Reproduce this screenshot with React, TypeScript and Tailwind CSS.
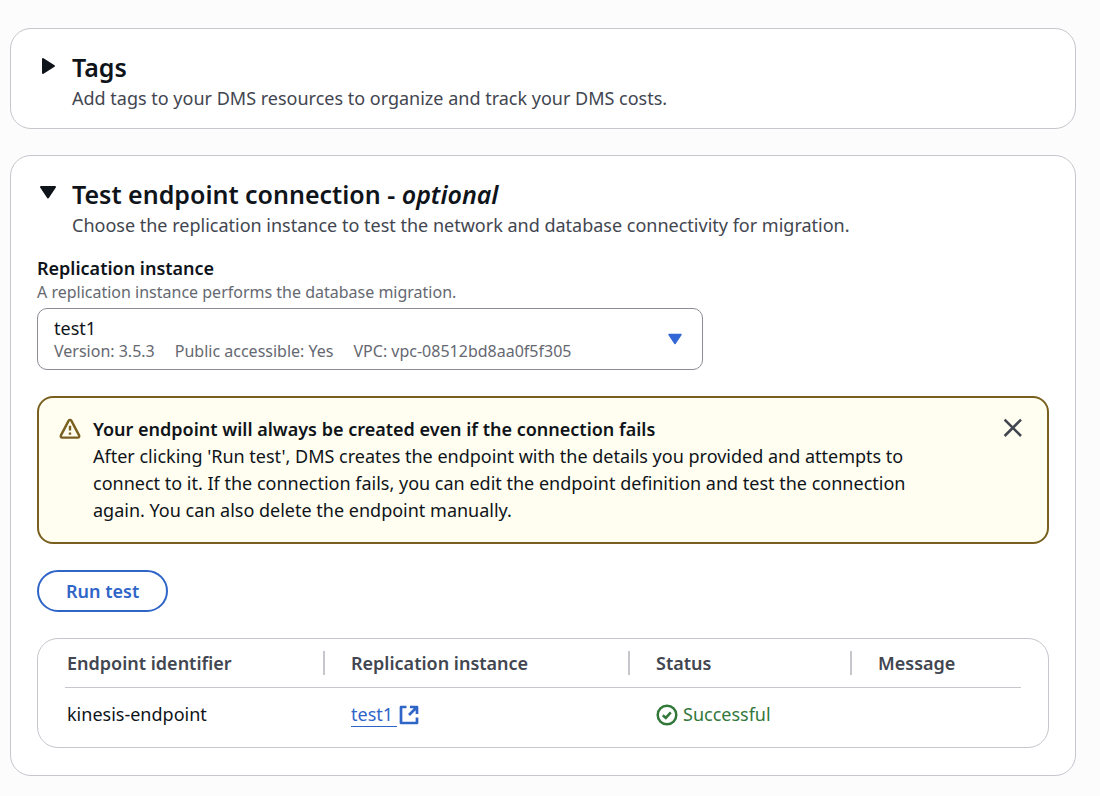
import { useState, type ReactNode } from "react";

function CaretIcon({ open }: { open: boolean }) {
  return (
    <svg width="22" height="22" viewBox="0 0 22 22" fill="currentColor" stroke="currentColor" strokeWidth="2" strokeLinejoin="round" aria-hidden="true">
      {open ? <path d="M4 5h14l-7 10.500z" /> : <path d="M6 4v14l11-7z" />}
    </svg>
  );
}

function WarningIcon() {
  return (
    <svg width="22" height="22" viewBox="0 0 22 22" fill="none" stroke="currentColor" strokeWidth="2.400" strokeLinejoin="round" aria-hidden="true">
      <path d="M9.700 2.600 1.900 17.400C1.400 18.500 2 19.600 3.200 19.600h15.600c1.200 0 1.800-1.100 1.300-2.200L12.300 2.600c-.6-1-2-1-2.600 0z" />
      <path d="M11 7.800v4.600M11 14.400v2.400" />
    </svg>
  );
}

function CloseIcon() {
  return (
    <svg width="20" height="20" viewBox="0 0 20 20" fill="none" stroke="currentColor" strokeWidth="2.600" aria-hidden="true">
      <path d="M1.600 1.600l16.400 16.400M18 1.600L1.600 18" />
    </svg>
  );
}

function ExternalIcon() {
  return (
    <svg width="20" height="20" viewBox="0 0 20 20" fill="none" stroke="currentColor" strokeWidth="2.700" strokeLinejoin="round" aria-hidden="true">
      <path d="M7.500 2H2v16h16v-5.500" />
      <path d="M11 2h7v7M17.500 2.500l-7.500 7.500" />
    </svg>
  );
}

function SuccessIcon() {
  return (
    <svg width="22" height="22" viewBox="0 0 22 22" fill="none" stroke="currentColor" strokeWidth="2.500" aria-hidden="true">
      <circle cx="11" cy="11" r="9.300" />
      <path d="M6.800 11.200l3 2.700 5-5.600" />
    </svg>
  );
}

type SectionProps = {
  title: ReactNode;
  description: string;
  defaultOpen?: boolean;
  children?: ReactNode;
};

function Section({ title, description, defaultOpen = false, children }: SectionProps) {
  const [open, setOpen] = useState(defaultOpen);
  return (
    <section className="rounded-[21px] border border-[#c6c6cd] bg-white px-[26px] pt-[22px] pb-4">
      <h2 className="text-[25px] leading-8 font-semibold">
        <button type="button" aria-expanded={open} onClick={() => setOpen(!open)} className="flex w-full items-center text-left">
          <span className="w-[35px] shrink-0 pb-0.5">
            <CaretIcon open={open} />
          </span>
          <span>{title}</span>
        </button>
      </h2>
      <p className="mt-0.5 pl-[35px] text-[#424650]">{description}</p>
      {open && children && <div className="mt-4 mb-[11px] flex flex-col gap-[26px]">{children}</div>}
    </section>
  );
}

function InstanceField() {
  return (
    <div>
      <label htmlFor="instance" className="block leading-[26px] font-semibold">
        Replication instance
      </label>
      <p id="instance-hint" className="text-[16px] leading-[22px] text-[#656871]">
        A replication instance performs the database migration.
      </p>
      <div className="mt-[5px] grid max-w-[666px]">
        <select
          id="instance"
          aria-describedby="instance-hint"
          className="col-start-1 row-start-1 h-[62px] appearance-none rounded-[10px] border border-[#8c8c94] bg-white px-4 pb-[22px]"
        >
          <option>test1</option>
        </select>
        <div className="pointer-events-none col-start-1 row-start-1 flex items-end justify-between pr-5 pb-2 pl-[17px]">
          <div className="flex gap-5 text-[16px] leading-[22px] text-[#656871]">
            <span>Version: 3.5.3</span>
            <span>Public accessible: Yes</span>
            <span>VPC: vpc-08512bd8aa0f5f305</span>
          </div>
          <svg width="16" height="12" viewBox="0 0 16 12" fill="#3367d6" stroke="#3367d6" strokeWidth="1.500" strokeLinejoin="round" className="mb-[17px]" aria-hidden="true">
            <path d="M2 1.500h12L8 10.500z" />
          </svg>
        </div>
      </div>
    </div>
  );
}

function Alert({ onDismiss }: { onDismiss: () => void }) {
  return (
    <div role="alert" className="flex items-start rounded-2xl border-2 border-[#7a6020] bg-[#fffef0] py-[18px] pr-6 pl-5">
      <span className="mt-0.5 mr-3 shrink-0 text-[#7a6020]">
        <WarningIcon />
      </span>
      <div className="flex-1">
        <p className="font-semibold">Your endpoint will always be created even if the connection fails</p>
        <p className="max-w-[850px]">
          After clicking 'Run test', DMS creates the endpoint with the details you provided and attempts to connect to it. If
          the connection fails, you can edit the endpoint definition and test the connection again. You can also delete the
          endpoint manually.
        </p>
      </div>
      <button type="button" aria-label="Dismiss" onClick={onDismiss} className="mt-0.5 shrink-0 text-[#424650]">
        <CloseIcon />
      </button>
    </div>
  );
}

const columns = [
  { name: "Endpoint identifier", width: "w-[260px]", pad: "pl-0.5" },
  { name: "Replication instance", width: "w-[305px]", pad: "pl-[26px]" },
  { name: "Status", width: "w-[222px]", pad: "pl-[26px]" },
  { name: "Message", width: "", pad: "pl-[26px]" },
];

function ResultsTable() {
  return (
    <div className="rounded-[21px] border border-[#c6c6cd] px-[27px] pb-1.5">
      <table className="w-full table-fixed border-collapse text-left">
        <thead>
          <tr className="border-b border-[#c6c6cd] text-[#424650]">
            {columns.map((column, i) => (
              <th key={column.name} scope="col" className={`py-3 font-semibold ${column.width}`}>
                <div className={`h-6 leading-6 ${column.pad} ${i < columns.length - 1 ? "border-r-2 border-[#c6c6cd]" : ""}`}>
                  {column.name}
                </div>
              </th>
            ))}
          </tr>
        </thead>
        <tbody>
          <tr>
            <td className="py-[13px] pl-0.5">kinesis-endpoint</td>
            <td className="py-[13px] pl-[26px]">
              <a href="#test1" className="inline-flex items-center text-[#3065c8]">
                <span className="border-b border-current pr-1 leading-6">test1</span>
                <span className="ml-0.5">
                  <ExternalIcon />
                </span>
              </a>
            </td>
            <td className="py-[13px] pl-[26px]">
              <span className="flex items-center gap-[5px] text-[#32783a]">
                <SuccessIcon />
                Successful
              </span>
            </td>
            <td className="py-[13px] pl-[26px]"></td>
          </tr>
        </tbody>
      </table>
    </div>
  );
}

export default function App() {
  const [showAlert, setShowAlert] = useState(true);
  return (
    <main className="flex min-h-screen flex-col gap-[26px] bg-[#fcfcfd] pt-7 pr-6 pb-5 pl-[10px] font-['Noto_Sans',sans-serif] text-[18px] leading-[27px] font-[450] text-[#0f141a]">
      <Section title="Tags" description="Add tags to your DMS resources to organize and track your DMS costs." />
      <Section
        title={
          <>
            Test endpoint connection - <em>optional</em>
          </>
        }
        description="Choose the replication instance to test the network and database connectivity for migration."
        defaultOpen
      >
        <InstanceField />
        {showAlert && <Alert onDismiss={() => setShowAlert(false)} />}
        <button type="button" className="h-[42px] self-start rounded-full border-2 border-[#3065c8] px-[27px] font-semibold text-[#3065c8]">
          Run test
        </button>
        <ResultsTable />
      </Section>
    </main>
  );
}
